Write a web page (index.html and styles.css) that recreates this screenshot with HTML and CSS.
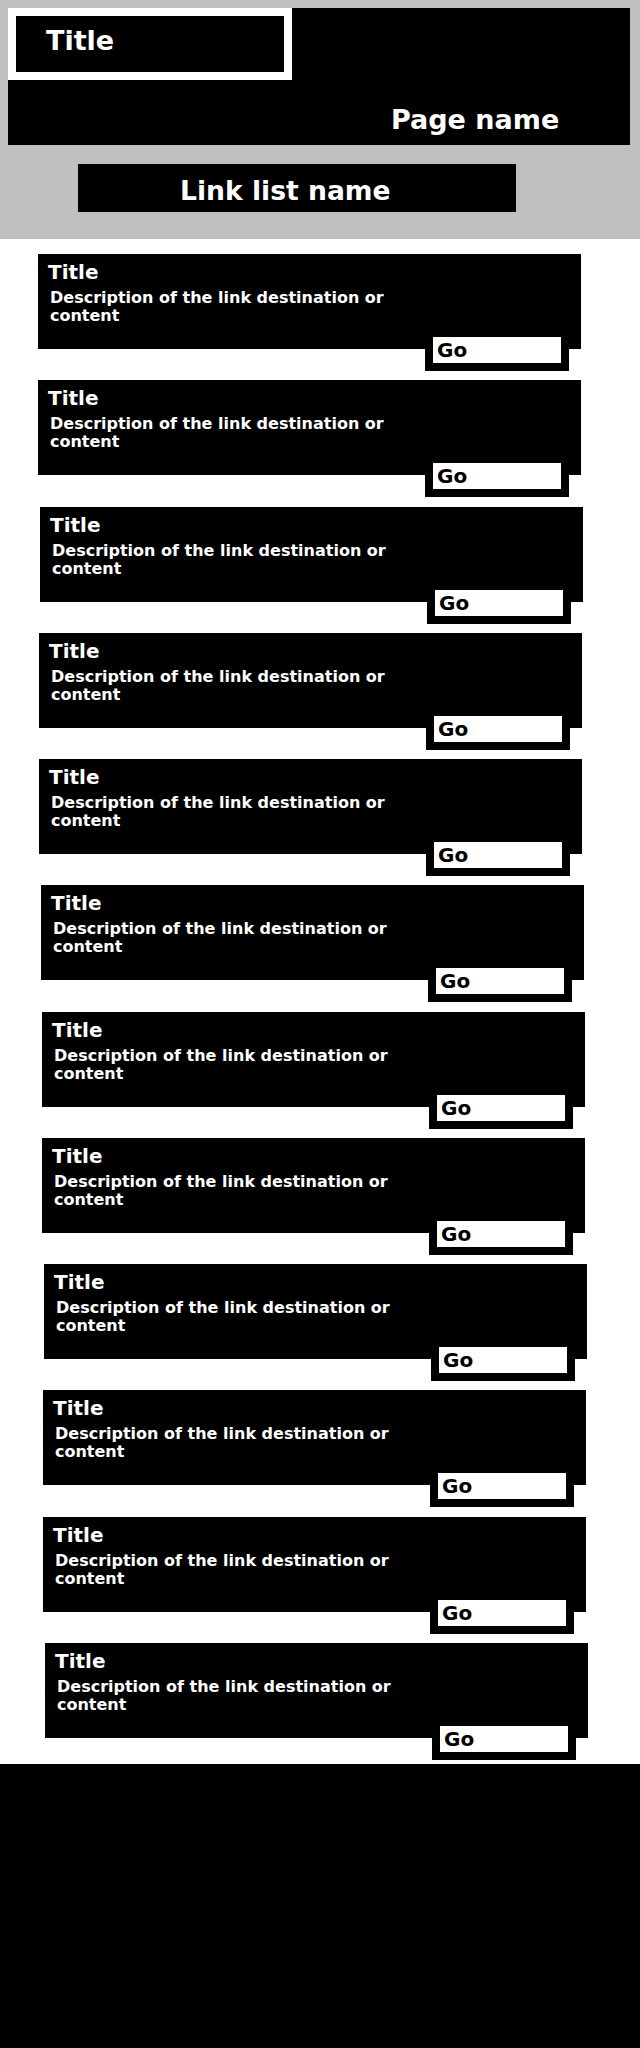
FILE: index.html
```html
<!DOCTYPE html>
<html lang="en">
<head>
<meta charset="utf-8">
<title>Page name</title>
<link rel="stylesheet" href="styles.css">
</head>
<body>
<header class="masthead">
  <div class="banner">
    <div class="site-title">Title</div>
    <div class="page-name">Page name</div>
  </div>
  <h1 class="list-name">Link list name</h1>
</header>
<main class="links">
  <div class="link-item"><a class="card" href="#"><h2 class="card-title">Title</h2><p class="card-desc">Description of the link destination or content</p></a><a class="go" href="#">Go</a></div>
  <div class="link-item"><a class="card" href="#"><h2 class="card-title">Title</h2><p class="card-desc">Description of the link destination or content</p></a><a class="go" href="#">Go</a></div>
  <div class="link-item"><a class="card" href="#"><h2 class="card-title">Title</h2><p class="card-desc">Description of the link destination or content</p></a><a class="go" href="#">Go</a></div>
  <div class="link-item"><a class="card" href="#"><h2 class="card-title">Title</h2><p class="card-desc">Description of the link destination or content</p></a><a class="go" href="#">Go</a></div>
  <div class="link-item"><a class="card" href="#"><h2 class="card-title">Title</h2><p class="card-desc">Description of the link destination or content</p></a><a class="go" href="#">Go</a></div>
  <div class="link-item"><a class="card" href="#"><h2 class="card-title">Title</h2><p class="card-desc">Description of the link destination or content</p></a><a class="go" href="#">Go</a></div>
  <div class="link-item"><a class="card" href="#"><h2 class="card-title">Title</h2><p class="card-desc">Description of the link destination or content</p></a><a class="go" href="#">Go</a></div>
  <div class="link-item"><a class="card" href="#"><h2 class="card-title">Title</h2><p class="card-desc">Description of the link destination or content</p></a><a class="go" href="#">Go</a></div>
  <div class="link-item"><a class="card" href="#"><h2 class="card-title">Title</h2><p class="card-desc">Description of the link destination or content</p></a><a class="go" href="#">Go</a></div>
  <div class="link-item"><a class="card" href="#"><h2 class="card-title">Title</h2><p class="card-desc">Description of the link destination or content</p></a><a class="go" href="#">Go</a></div>
  <div class="link-item"><a class="card" href="#"><h2 class="card-title">Title</h2><p class="card-desc">Description of the link destination or content</p></a><a class="go" href="#">Go</a></div>
  <div class="link-item"><a class="card" href="#"><h2 class="card-title">Title</h2><p class="card-desc">Description of the link destination or content</p></a><a class="go" href="#">Go</a></div>
</main>
<footer class="footer"></footer>
</body>
</html>
```
FILE: styles.css
```css
* { box-sizing: border-box; }

body {
  margin: 0;
  background: #fff;
  font-family: "DejaVu Sans", sans-serif;
  font-weight: bold;
}

.masthead {
  background: #c0c0c0;
  padding: 8px 0 0 8px;
  height: 239px;
}

.banner {
  width: 622px;
  height: 137px;
  background: #000;
  display: flex;
  flex-direction: column;
}

.site-title {
  width: 284px;
  height: 72px;
  border: 8px solid #fff;
  padding: 9px 0 0 30px;
  color: #fff;
  font-size: 27px;
  line-height: normal;
}

.page-name {
  margin: 24px 0 0 383px;
  color: #fff;
  font-size: 27px;
  line-height: normal;
}

.list-name {
  margin: 19px 0 0 70px;
  width: 438px;
  height: 48px;
  background: #000;
  color: #fff;
  font-size: 26.6px;
  font-weight: bold;
  line-height: normal;
  padding: 11px 0 0 102px;
}

.links {
  display: flex;
  flex-direction: column;
  gap: 9.27px;
  padding: 15px 0 4px 38px;
}

.link-item {
  width: 543px;
  display: flex;
  flex-direction: column;
}

.link-item:nth-child(3) { margin-left: 2px; }
.link-item:nth-child(4) { margin-left: 1px; }
.link-item:nth-child(5) { margin-left: 1px; }
.link-item:nth-child(6) { margin-left: 3px; }
.link-item:nth-child(7) { margin-left: 4px; }
.link-item:nth-child(8) { margin-left: 4px; }
.link-item:nth-child(9) { margin-left: 6px; }
.link-item:nth-child(10) { margin-left: 5px; }
.link-item:nth-child(11) { margin-left: 5px; }
.link-item:nth-child(12) { margin-left: 7px; }

.card {
  display: block;
  height: 95px;
  background: #000;
  color: #fff;
  text-decoration: none;
  padding: 6px 10px 0;
}

.card-title {
  margin: 0;
  font-size: 20px;
  line-height: normal;
}

.card-desc {
  margin: 5px 0 0 2px;
  max-width: 360px;
  font-size: 16px;
  line-height: 18px;
}

.go {
  position: relative;
  align-self: flex-end;
  margin: -20px 12px 0 0;
  width: 144px;
  height: 42px;
  border: 8px solid #000;
  background: #fff;
  color: #000;
  text-decoration: none;
  font-size: 20px;
  line-height: 26px;
  padding-left: 4px;
}

.footer {
  background: #000;
  height: 284px;
}
```
